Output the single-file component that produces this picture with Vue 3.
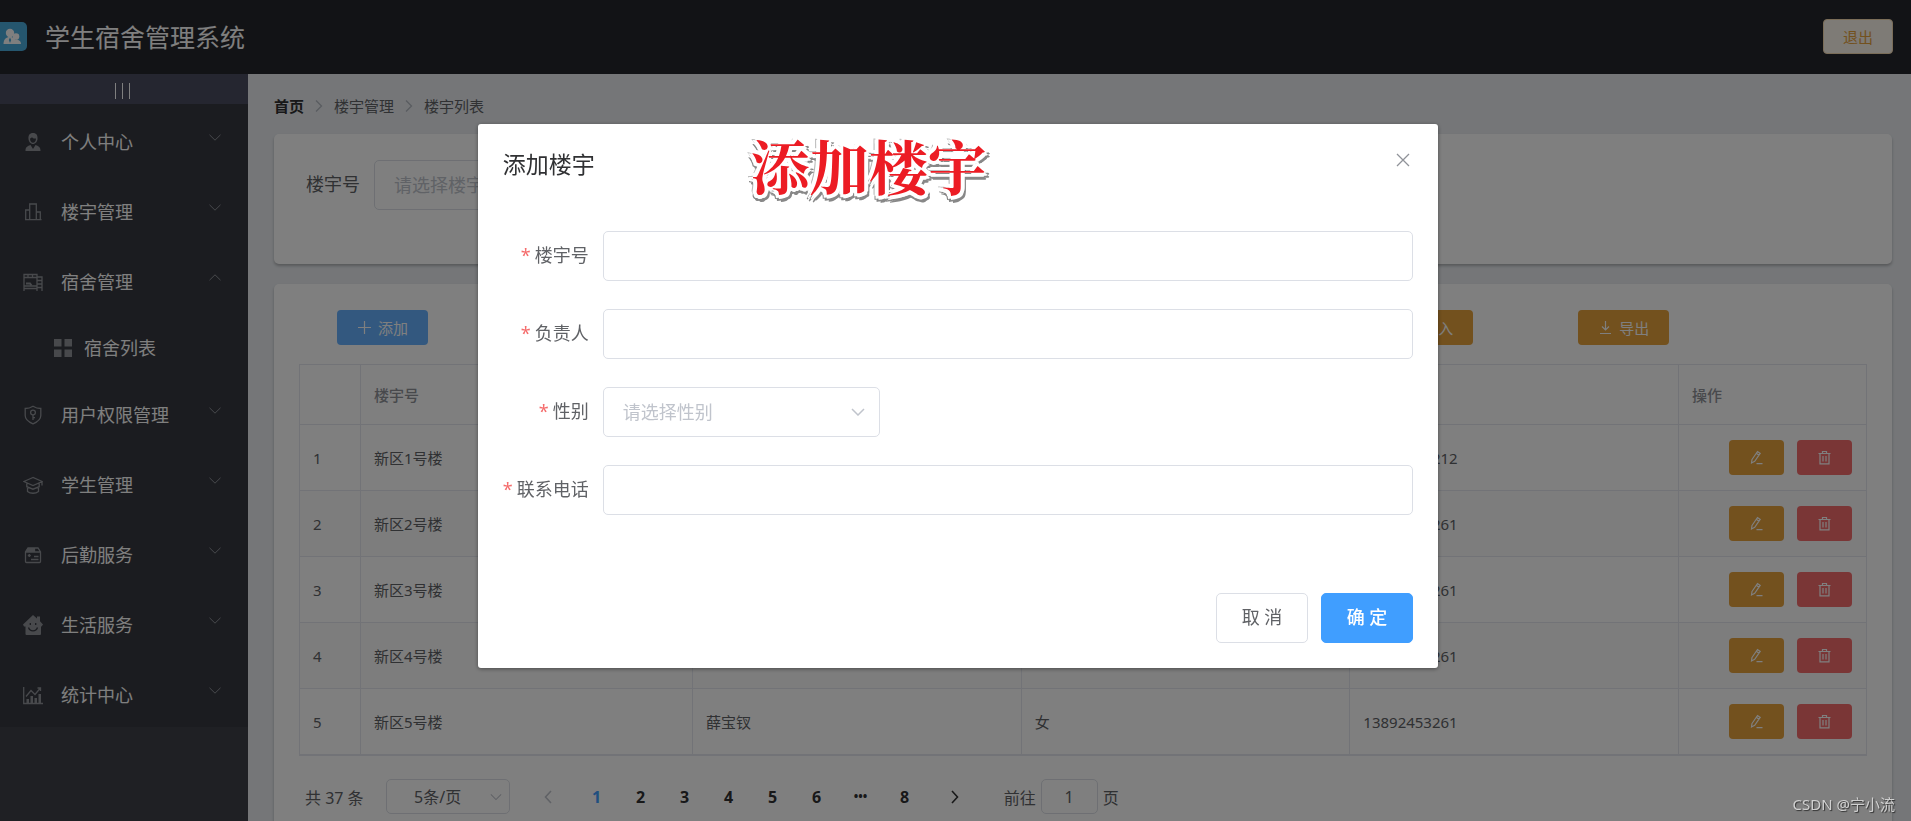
<script setup>
import { ref, reactive } from 'vue'

const menus = [
  { label: '个人中心', icon: 'user' },
  { label: '楼宇管理', icon: 'building' },
  { label: '宿舍管理', icon: 'bed', open: true, children: ['宿舍列表'] },
  { label: '用户权限管理', icon: 'shield' },
  { label: '学生管理', icon: 'cap' },
  { label: '后勤服务', icon: 'box' },
  { label: '生活服务', icon: 'house' },
  { label: '统计中心', icon: 'chart' }
]

const rows = [
  { id: 1, name: '新区1号楼', phone: '13892453212' },
  { id: 2, name: '新区2号楼', phone: '13892453261' },
  { id: 3, name: '新区3号楼', phone: '13892453261' },
  { id: 4, name: '新区4号楼', phone: '13892453261' },
  { id: 5, name: '新区5号楼', owner: '薛宝钗', sex: '女', phone: '13892453261' }
]

const pages = ['1', '2', '3', '4', '5', '6', '•••', '8']
const jump = ref('1')
const search = ref('')
const size = ref('5')
const form = reactive({ no: '', owner: '', sex: '', phone: '' })
</script>

<template>
  <div class="app">
    <header class="header">
      <svg class="logo" viewBox="0 0 28 29">
        <rect x="-4" y="0" width="31" height="29" rx="5" fill="#4bacdc" />
        <g fill="#fff">
          <circle cx="16" cy="14.500" r="3.300" />
          <path d="M12 22c0-3 2-4.500 4.200-4.500s4.800 1.500 4.800 4.500z" />
          <circle cx="10" cy="11" r="4.200" />
          <path d="M3.500 22c0-4.500 2.500-7 6.500-7s6 2.500 6 7z" />
        </g>
        <path d="M10 15.500l1.200 2.500L10 21l-1.200-3z" fill="#4bacdc" />
      </svg>
      <h1>学生宿舍管理系统</h1>
      <button class="btn logout" type="button">退出</button>
    </header>

    <div class="body">
      <aside class="aside">
        <button class="toggle" type="button" aria-label="折叠菜单">
          <i></i><i></i><i></i>
        </button>
        <nav class="menu">
          <template v-for="m in menus" :key="m.label">
            <a href="#" class="item">
              <svg class="mi" viewBox="0 0 20 20" fill="none" stroke="#909399" stroke-width="1.300">
                <g v-if="m.icon === 'user'" fill="#909399" stroke="none">
                  <path d="M5.500 7C5 2.500 7.500 1 10 1s5 1.500 4.500 6c-.2 2.500-2 5-4.500 5S5.700 9.500 5.500 7zm1.500-.500c0 2.500 1.300 4.300 3 4.300s3-1.800 3-4.300c-2 .3-3.500-.3-4-1.500-.3.900-1 1.400-2 1.500z" />
                  <path d="M2.500 19c0-3.500 1-4.500 5-6l2.500 4 2.500-4c4 1.500 5 2.500 5 6z" />
                </g>
                <path v-else-if="m.icon === 'building'" d="M2.700 18V8h4v10M6.700 18V2h6.600v16M13.300 10h4v8M2 17.700h16.500" />
                <g v-else-if="m.icon === 'bed'">
                  <path d="M1 19V2.500h13V19M1 5.500h13M1 14h13M1 16.500h13M14 5h5v14M14 8.500h5M14 12h5M14 15.500h5M5 2.500v3M9.500 2.500v3" />
                  <path d="M3 11.500h4l1.500 2" stroke-width="2" />
                </g>
                <g v-else-if="m.icon === 'shield'">
                  <path d="M10 1.200c2.500 1.600 5 2.300 7.800 2.300v7c0 3.500-3 6.300-7.800 8.300-4.800-2-7.800-4.800-7.800-8.300v-7C5 3.500 7.500 2.800 10 1.200z" />
                  <circle cx="10" cy="7.500" r="2.400" /><path d="M10 9.900v5M10 12.700h2" />
                </g>
                <path v-else-if="m.icon === 'cap'" d="M10 2.500L.8 6.500 10 10.500l9.200-4zM3.800 8.500v3.200l6.200 2.500 6.200-2.500V8.500M4.500 12v4.500c3 2.300 8 2.300 11 0V12M19 6.500v4" />
                <g v-else-if="m.icon === 'box'">
                  <path d="M2.500 7v9.500a1 1 0 0 0 1 1h13a1 1 0 0 0 1-1V7l-2.500-4H5zM2.500 7h15M11.500 3v4M8 14.500h7.500M11 11.500h4.500M4.800 10.500h3M6.300 9v3" />
                  <path d="M4.500 3H11v4H2.500z" fill="#909399" stroke="none" />
                </g>
                <g v-else-if="m.icon === 'house'">
                  <path d="M10 0l4 3.500V1.500h3v4.800l3 3.200-1.500 2H18V19a1 1 0 0 1-1 1H3.500a1 1 0 0 1-1-1v-7.500H1L0 9.500z" fill="#909399" stroke="none" />
                  <path d="M5.500 12.500c1.500 4.500 7.500 4.500 9 0" stroke="#363840" />
                  <path d="M7.300 8v2M12.700 8v2" stroke="#363840" />
                </g>
                <g v-else>
                  <path d="M.7 2v16.500H20M3 11.500l5-6 4 4 5-6M14.500 3H17.500v3" />
                  <path d="M3.500 18v-4h2.500v4zM7.500 18v-7H10v7zM11.500 18v-5H14v5zM15.500 18V9H18v9z" fill="#909399" stroke="none" />
                </g>
              </svg>
              <span>{{ m.label }}</span>
              <svg class="arrow" viewBox="0 0 12 7" fill="none" stroke="#909399">
                <path :d="m.open ? 'M.5 6.200L6 .8l5.500 5.400' : 'M.5.8L6 6.200 11.500.8'" />
              </svg>
            </a>
            <a v-for="c in m.children" :key="c" href="#" class="item sub">
              <svg class="mi" viewBox="0 0 18 18" fill="#909399">
                <path d="M0 0h7.500v7.500H0zM10.500 0H18v7.500h-7.500zM0 10.500h7.500V18H0zM10.500 10.500H18V18h-7.500z" />
              </svg>
              <span>{{ c }}</span>
            </a>
          </template>
        </nav>
      </aside>

      <main class="main">
        <nav class="crumbs">
          <a href="#">首页</a>
          <svg viewBox="0 0 8 12"><path d="M1 .5L6.500 6 1 11.500" /></svg>
          <span>楼宇管理</span>
          <svg viewBox="0 0 8 12"><path d="M1 .5L6.500 6 1 11.500" /></svg>
          <span>楼宇列表</span>
        </nav>

        <section class="card search">
          <label for="search-no">楼宇号</label>
          <div class="select">
            <select id="search-no" v-model="search" class="field empty">
              <option value="" disabled>请选择楼宇号</option>
            </select>
          </div>
        </section>

        <section class="card list">
          <div class="tools">
            <button class="btn primary add" type="button">
              <svg viewBox="0 0 15 15"><path d="M7.500 1v13M1 7.500h13" /></svg>添加
            </button>
            <button class="btn warn import" type="button">
              <svg viewBox="0 0 15 15"><path d="M7.500 11V2M4 5.500L7.500 2 11 5.500M2 13.500h11" /></svg>导入
            </button>
            <button class="btn warn export" type="button">
              <svg viewBox="0 0 15 15"><path d="M7.500 1v9M4 6.500L7.500 10 11 6.500M2 13.500h11" /></svg>导出
            </button>
          </div>

          <table>
            <colgroup>
              <col class="c-idx" /><col class="c-name" /><col /><col /><col /><col class="c-op" />
            </colgroup>
            <thead>
              <tr>
                <th></th>
                <th>楼宇号</th>
                <th>负责人</th>
                <th>性别</th>
                <th>联系电话</th>
                <th>操作</th>
              </tr>
            </thead>
            <tbody>
              <tr v-for="r in rows" :key="r.id">
                <td>{{ r.id }}</td>
                <td>{{ r.name }}</td>
                <td>{{ r.owner }}</td>
                <td>{{ r.sex }}</td>
                <td>{{ r.phone }}</td>
                <td>
                  <div class="ops">
                    <button class="btn warn" type="button" aria-label="编辑">
                      <svg viewBox="0 0 15 15"><path d="M3 9.500L8.500 1.500l2.700 1.900-5.500 8L2.500 13zM7.300 3.300L10 5.200M7.500 13.700h6" /></svg>
                    </button>
                    <button class="btn danger" type="button" aria-label="删除">
                      <svg viewBox="0 0 15 15"><path d="M1.500 3.500h12M5.500 3.500v-2h4v2M3 3.500v10.300h9V3.500M6 6v5.500M9 6v5.500" /></svg>
                    </button>
                  </div>
                </td>
              </tr>
            </tbody>
          </table>

          <div class="pager">
            <span class="total">共 37 条</span>
            <div class="select size">
              <select v-model="size" class="field" aria-label="每页条数">
                <option value="5">5条/页</option>
              </select>
              <svg class="caret" viewBox="0 0 14 8"><path d="M1 1l6 6 6-6" /></svg>
            </div>
            <button class="pg prev off" type="button" aria-label="上一页">
              <svg viewBox="0 0 8 14"><path d="M7 1L1.500 7 7 13" /></svg>
            </button>
            <button v-for="p in pages" :key="p" class="pg" :class="{ on: p === '1', dots: p === '•••' }" type="button">{{ p }}</button>
            <button class="pg next" type="button" aria-label="下一页">
              <svg viewBox="0 0 8 14"><path d="M1 1l5.500 6L1 13" /></svg>
            </button>
            <label class="goto">前往 <input v-model="jump" class="field" type="text" /> 页</label>
          </div>
        </section>
      </main>
    </div>

    <div class="mask">
      <div class="dialog" role="dialog" aria-label="添加楼宇">
        <div class="dhead">
          <h2>添加楼宇</h2>
          <button class="close" type="button" aria-label="关闭">
            <svg viewBox="0 0 14 14"><path d="M1 1l12 12M13 1L1 13" /></svg>
          </button>
        </div>
        <form class="form" @submit.prevent>
          <label for="f-no">楼宇号</label>
          <input id="f-no" v-model="form.no" class="field" type="text" />
          <label for="f-owner">负责人</label>
          <input id="f-owner" v-model="form.owner" class="field" type="text" />
          <label for="f-sex">性别</label>
          <div class="select sex">
            <select id="f-sex" v-model="form.sex" class="field empty">
              <option value="" disabled>请选择性别</option>
              <option>男</option>
              <option>女</option>
            </select>
            <svg class="caret" viewBox="0 0 14 8"><path d="M1 1l6 6 6-6" /></svg>
          </div>
          <label for="f-phone">联系电话</label>
          <input id="f-phone" v-model="form.phone" class="field" type="text" />
        </form>
        <div class="dfoot">
          <button class="btn big" type="button">取 消</button>
          <button class="btn big ok" type="button">确 定</button>
        </div>
        <div class="stamp">添加楼宇</div>
      </div>
    </div>

    <div class="watermark">CSDN @宁小流</div>
  </div>
</template>

<style>
html,
body {
  margin: 0;
  overflow: hidden;
}
</style>

<style scoped>
* {
  box-sizing: border-box;
}
.app {
  height: 100vh;
  display: flex;
  flex-direction: column;
  overflow: hidden;
  font-family: "Noto Sans", "Noto Sans CJK SC", sans-serif;
  font-size: 15px;
  color: #606266;
}
button,
input,
select {
  font: inherit;
  color: inherit;
  margin: 0;
}
a {
  color: inherit;
  text-decoration: none;
}
svg {
  display: block;
  flex: none;
}
h1,
h2 {
  margin: 0;
  font-weight: 400;
}

.header {
  height: 74px;
  flex: none;
  display: flex;
  align-items: center;
  padding: 0 18px 1px 0;
  background: #24262c;
  color: #fff;
}
.logo {
  width: 28px;
  height: 29px;
}
h1 {
  flex: 1;
  margin-left: 17px;
  font-size: 25px;
  line-height: 36px;
}

.btn {
  height: 35px;
  border: 1px solid transparent;
  border-radius: 4px;
  padding: 0 19px;
  font-size: 15px;
  line-height: 20px;
  color: #fff;
  display: flex;
  align-items: center;
  justify-content: center;
  gap: 6px;
  white-space: nowrap;
}
.btn svg {
  width: 15px;
  height: 15px;
  fill: none;
  stroke: #fff;
  stroke-width: 1.2;
}
.primary {
  background: #66b1ff;
}
.warn {
  background: #e6a23c;
}
.danger {
  background: #f56c6c;
}
.logout {
  background: #fdf6ec;
  border-color: #f5dab1;
  color: #e6a23c;
}

.body {
  flex: 1;
  min-height: 0;
  display: flex;
}
.aside {
  width: 248px;
  flex: none;
  background: #3e4048;
}
.toggle {
  width: 100%;
  height: 30px;
  border: 0;
  padding: 4px 4px 0 0;
  background: #4a4c60;
  display: flex;
  align-items: center;
  justify-content: center;
  gap: 6px;
}
.toggle i {
  width: 1px;
  height: 16px;
  background: #fff;
}
.menu {
  background: #363840;
}
.item {
  height: 70px;
  display: flex;
  align-items: center;
  padding: 5px 27px 0 23px;
  font-size: 18px;
  line-height: 26px;
  color: #fff;
}
.item span {
  flex: 1;
  margin-left: 18px;
}
.mi {
  width: 20px;
  height: 20px;
}
.arrow {
  width: 12px;
  height: 7px;
  margin-bottom: 8px;
}
.sub {
  height: 63px;
  padding: 4px 27px 0 54px;
}
.sub .mi {
  width: 18px;
  height: 18px;
}
.sub span {
  margin-left: 12px;
}

.main {
  flex: 1;
  min-width: 0;
  padding: 0 19px 0 26px;
  background: #eaedf1;
  overflow: hidden;
}
.crumbs {
  height: 60px;
  padding-top: 3px;
  display: flex;
  align-items: center;
  gap: 11px;
}
.crumbs a {
  font-weight: 700;
  color: #303133;
}
.crumbs svg {
  width: 8px;
  height: 12px;
  fill: none;
  stroke: #b4b8c0;
  stroke-width: 1.3;
}
.card {
  background: #fff;
  border-radius: 5px;
  box-shadow: 0 2px 3px rgba(0, 0, 0, 0.25);
}
.search {
  height: 130px;
  margin-bottom: 20px;
  padding: 26px 32px;
  display: flex;
  align-items: flex-start;
  gap: 14px;
  font-size: 18px;
}
.search label {
  line-height: 49px;
}
.search .select {
  width: 277px;
}
.field {
  width: 100%;
  height: 50px;
  border: 1px solid #dcdfe6;
  border-radius: 5px;
  padding: 0 19px;
  background: #fff;
  font-size: 18px;
  appearance: none;
  outline: 0;
}
.empty {
  color: #c0c4cc;
}
.select {
  display: grid;
  align-items: center;
}
.select > * {
  grid-area: 1 / 1;
}
.caret {
  width: 14px;
  height: 8px;
  margin-right: 15px;
  justify-self: end;
  fill: none;
  stroke: #c0c4cc;
  stroke-width: 1.5;
  pointer-events: none;
}

.list {
  height: 600px;
  padding: 26px 25px 25px;
}
.tools {
  display: grid;
  grid-template-columns: repeat(24, 1fr);
  padding-left: 38px;
  margin: 0 -38px 19px 0;
}
.tools .btn {
  width: 91px;
}
.add {
  grid-column: 1 / span 3;
}
.import {
  grid-column: 17 / span 3;
}
.export {
  grid-column: 20 / span 3;
}

table {
  width: 100%;
  table-layout: fixed;
  border-collapse: separate;
  border-spacing: 0;
  border: 1px solid #e4e7ef;
  border-right: 0;
}
.c-idx {
  width: 61px;
}
.c-name {
  width: 332px;
}
.c-op {
  width: 188px;
}
th,
td {
  height: 66px;
  padding: 0 12px 0 13px;
  border-right: 1px solid #e4e7ef;
  border-bottom: 1px solid #e4e7ef;
  text-align: left;
  line-height: 28px;
}
th {
  height: 60px;
  font-weight: 500;
  color: #909399;
}
tbody tr:nth-child(even) {
  background: #fafafa;
}
.ops {
  display: flex;
  justify-content: flex-end;
  gap: 13px;
  padding-right: 2px;
}

.pager {
  display: flex;
  align-items: center;
  margin-top: 23px;
  padding-left: 6px;
  font-size: 16px;
}
.pager .field {
  height: 35px;
  padding: 0;
  font-size: 16px;
  text-align: center;
}
.size {
  width: 124px;
  margin: 0 16px 0 22px;
}
.pager .size .field {
  padding-right: 20px;
  text-align-last: center;
}
.size .caret {
  margin-right: 8px;
  width: 12px;
  stroke-width: 1.2;
}
.pg {
  width: 44px;
  height: 35px;
  border: 0;
  padding: 0;
  background: none;
  font-weight: 700;
  color: #303133;
  display: flex;
  align-items: center;
  justify-content: center;
}
.pg svg {
  width: 8px;
  height: 14px;
  fill: none;
  stroke: #303133;
  stroke-width: 1.6;
}
.prev {
  margin-right: 5px;
}
.next {
  margin-left: 6px;
}
.pg.off svg {
  stroke: #c0c4cc;
}
.pg.on {
  color: #409eff;
}
.pg.dots {
  font-size: 12px;
}
.goto {
  margin-left: 27px;
  display: flex;
  align-items: center;
  gap: 5px;
}
.goto .field {
  width: 57px;
}

.mask {
  position: fixed;
  inset: 0;
  background: rgba(0, 0, 0, 0.5);
}
.dialog {
  position: relative;
  margin: 124px 24.75% 0 25%;
  padding: 25px;
  background: #fff;
  border-radius: 3px;
  box-shadow: 0 1px 4px rgba(0, 0, 0, 0.4);
}
.dhead {
  display: flex;
  justify-content: space-between;
  align-items: flex-start;
}
h2 {
  font-size: 23px;
  line-height: 31px;
  color: #303133;
}
.close {
  border: 0;
  padding: 4px 3px;
  background: none;
}
.close svg {
  width: 14px;
  height: 14px;
  fill: none;
  stroke: #909399;
  stroke-width: 1.3;
}
.form {
  display: grid;
  grid-template-columns: 86px 1fr;
  column-gap: 14px;
  row-gap: 28px;
  margin-top: 51px;
  font-size: 18px;
}
.form label {
  text-align: right;
  line-height: 48px;
  white-space: nowrap;
}
.form label::before {
  content: "*";
  margin-right: 4px;
  color: #f56c6c;
}
.sex {
  width: 277px;
}
.dfoot {
  display: flex;
  justify-content: flex-end;
  gap: 13px;
  margin-top: 78px;
}
.btn.big {
  width: 92px;
  height: 50px;
  padding: 0 0 2px;
  border-radius: 5px;
  border-color: #dcdfe6;
  font-size: 18px;
  background: #fff;
  color: #606266;
}
.btn.ok {
  background: #409eff;
  border-color: #409eff;
  color: #fff;
  font-weight: 500;
}
.stamp {
  position: absolute;
  left: 273px;
  top: 6px;
  font-family: "Noto Serif CJK SC", "Noto Sans CJK SC", serif;
  font-size: 59px;
  line-height: 70px;
  font-weight: 700;
  color: #ec1c24;
  text-shadow: 4px 0 #fff, -4px 0 #fff, 0 4px #fff, 0 -4px #fff, 3px 3px #fff,
    -3px 3px #fff, 3px -3px #fff, -3px -3px #fff, 5px 2px #888, 5px 5px #888,
    2px 7px #888, -2px 6px #888, -4px 4px #888, -5px -1px #bbb;
}
.watermark {
  position: fixed;
  right: 16px;
  bottom: 6px;
  font-size: 15px;
  line-height: 22px;
  color: #d0d0d0;
  text-shadow: 1px 1px 1px rgba(0, 0, 0, 0.6);
}
</style>
